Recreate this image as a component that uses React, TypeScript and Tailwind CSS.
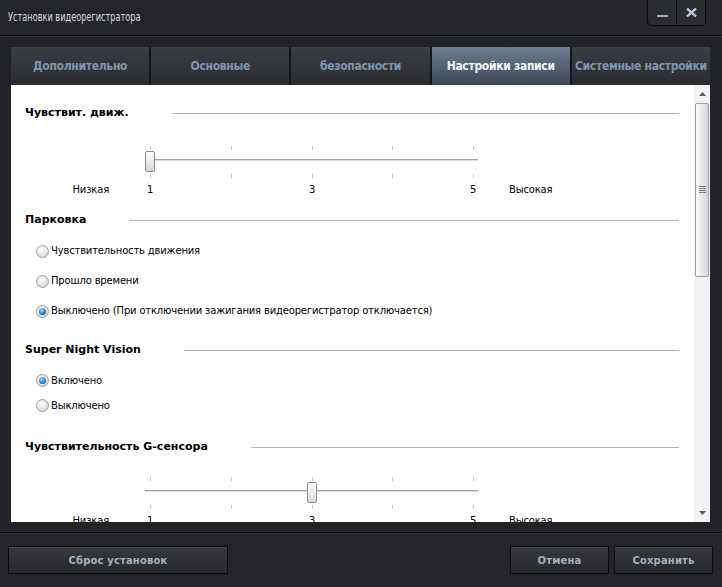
import React from "react";

const body = "font-['DejaVu_Sans',sans-serif] text-[10px] tracking-[-0.17px] text-black";
const head = "font-['DejaVu_Sans',sans-serif] font-bold text-[11px] text-black";
const narrow = "font-['DejaVu_Sans_Condensed',sans-serif]";

const TICKS = [0, 1, 2, 3, 4];

function Heading({ text }: { text: string }) {
  return (
    <div className="flex h-[16px] items-center">
      <span className={`${head} leading-[16px] whitespace-nowrap`}>{text}</span>
      <div className="ml-[43px] h-px flex-1 bg-[#a9b5c1]" />
    </div>
  );
}

function Slider({ value }: { value: number }) {
  const tx = (i: number) => 5 + i * 80.75;
  return (
    <div className="relative ml-[120px] h-[52px] w-[334px]">
      {TICKS.map((i) => (
        <div key={"t" + i} className="absolute top-0 h-[4px] w-px bg-[#c6c6c6]" style={{ left: Math.round(tx(i)) }} />
      ))}
      <div className="absolute left-0 top-[13px] w-[333px]">
        <div className="h-px bg-[#a4a4a4]" />
        <div className="h-px bg-[#dedede]" />
      </div>
      {TICKS.map((i) => (
        <div key={"b" + i} className="absolute top-[28px] h-[4px] w-px bg-[#c6c6c6]" style={{ left: Math.round(tx(i)) }} />
      ))}
      <div
        className="absolute top-[5px] h-[21px] w-[10px] rounded-[2px] border border-[#8a8a8a] bg-gradient-to-b from-[#ffffff] to-[#d6d6d6]"
        style={{ left: Math.round(tx(value)) - 5 }}
      />
      {[0, 2, 4].map((i) => (
        <div
          key={"n" + i}
          className={`${body} absolute top-[37px] w-[20px] text-center leading-[14px]`}
          style={{ left: Math.round(tx(i)) - 10 }}
        >
          {i + 1}
        </div>
      ))}
      <div className={`${body} absolute right-[calc(100%+36px)] top-[37px] leading-[14px] whitespace-nowrap`}>Низкая</div>
      <div className={`${body} absolute left-[364px] top-[37px] leading-[14px] whitespace-nowrap`}>Высокая</div>
    </div>
  );
}

function Radio({ checked, label, h }: { checked?: boolean; label: string; h: string }) {
  return (
    <div className={`flex items-center pl-[11px] ${h}`}>
      <span className="flex h-[13px] w-[13px] items-center justify-center rounded-full border border-[#a0a0a0] bg-[radial-gradient(circle_at_40%_35%,#ffffff,#e6e6e6_50%,#c4c4c4)]">
        {checked && (
          <span className="h-[7px] w-[7px] rounded-full bg-[radial-gradient(circle_at_40%_35%,#a5dafc,#2a7fc8_55%,#0c3f78)]" />
        )}
      </span>
      <span className={`${body} ml-[2px] leading-[14px] whitespace-nowrap`}>{label}</span>
    </div>
  );
}

function Tab({ label, active }: { label: string; active?: boolean }) {
  return (
    <div
      className={`flex min-w-0 flex-1 basis-0 items-center justify-center overflow-hidden ${narrow} font-bold text-[12px] tracking-[-0.3px] whitespace-nowrap ${
        active
          ? "bg-gradient-to-b from-[#6d7d91] to-[#3d4857] text-[#f4f5f6]"
          : "bg-gradient-to-b from-[#3a3d42] to-[#2a2c30] text-[#7f96b2]"
      }`}
    >
      {label}
    </div>
  );
}

function FootButton({ label, w }: { label: string; w: string }) {
  return (
    <button
      className={`${w} h-[28px] border border-[#0b0b0c] bg-gradient-to-b from-[#36383c] to-[#26282b] shadow-[inset_0_1px_0_#44474c] font-['DejaVu_Sans',sans-serif] font-bold text-[10px] tracking-[0.15px] text-[#a2afbf]`}
    >
      {label}
    </button>
  );
}

export default function App() {
  return (
    <div className="flex h-[587px] w-[722px] flex-col overflow-hidden bg-[#222326]">
      {/* title bar */}
      <div className="flex h-[36px] items-start justify-between border-b border-[#0e0f10] bg-[#242528]">
        <div className="flex h-[14px] items-center pl-[8px] pt-0 mt-[10px]">
          <span
            className={`${narrow} block origin-left scale-x-[0.7] whitespace-nowrap text-[13px] leading-[14px] text-[#d8d8d8]`}
          >
            Установки видеорегистратора
          </span>
        </div>
        <div className="mr-[16px] flex h-[26px] overflow-hidden rounded-b-[5px] border border-t-0 border-[#0b0b0c] bg-[#2a2c2f]">
          <div className="flex w-[28px] items-start justify-center pt-[15px]">
            <svg width="11" height="3" viewBox="0 0 11 3">
              <rect x="0" y="0" width="11" height="2" fill="#a9b1bd" />
            </svg>
          </div>
          <div className="w-px bg-[#111214]" />
          <div className="flex w-[28px] items-start justify-center pt-[8px]">
            <svg width="11" height="9" viewBox="0 0 11 9">
              <path d="M1 0.5 L10 8.5 M10 0.5 L1 8.5" stroke="#b9c5d6" strokeWidth="2.4" />
            </svg>
          </div>
        </div>
      </div>
      <div className="h-px bg-[#2f3135]" />

      {/* body */}
      <div className="pl-[11px] pr-[12px] pt-[10px]">
        <div className="flex h-[38px] gap-[2px] bg-[#151618]">
          <Tab label="Дополнительно" />
          <Tab label="Основные" />
          <Tab label="безопасности" />
          <Tab label="Настройки записи" active />
          <Tab label="Системные настройки" />
        </div>
        <div className="flex h-[437px] bg-white">
          <div className="flex-1 overflow-hidden pl-[14px] pr-[15px]">
            <div className="pt-[20px]">
              <Heading text="Чувствит. движ." />
              <div className="h-[25px]" />
              <Slider value={0} />
              <div className="h-[14px]" />
              <Heading text="Парковка" />
              <div className="h-[8px]" />
              <Radio h="h-[30px]" label="Чувствительность движения" />
              <Radio h="h-[30px]" label="Прошло времени" />
              <Radio h="h-[30px]" checked label="Выключено (При отключении зажигания видеорегистратор отключается)" />
              <div className="h-[16px]" />
              <Heading text="Super Night Vision" />
              <div className="h-[10px]" />
              <Radio h="h-[25px]" checked label="Включено" />
              <Radio h="h-[25px]" label="Выключено" />
              <div className="h-[21px]" />
              <Heading text="Чувствительность G-сенсора" />
              <div className="h-[22px]" />
              <Slider value={2} />
            </div>
          </div>
          {/* scrollbar */}
          <div className="flex w-[16px] flex-col items-center bg-[#f2f2f2]">
            <div className="flex h-[18px] items-center justify-center">
              <svg width="7" height="4" viewBox="0 0 7 4">
                <path d="M0 4 L3.5 0 L7 4 Z" fill="#5a5a5a" />
              </svg>
            </div>
            <div className="flex h-[174px] w-[14px] items-center justify-center rounded-[2px] border border-[#9e9e9e] bg-gradient-to-r from-[#fafafa] to-[#d6d6d6]">
              <svg width="7" height="8" viewBox="0 0 7 8">
                <rect x="0" y="0" width="7" height="1" fill="#7a7a7a" />
                <rect x="0" y="2" width="7" height="1" fill="#7a7a7a" />
                <rect x="0" y="4" width="7" height="1" fill="#7a7a7a" />
                <rect x="0" y="6" width="7" height="1" fill="#7a7a7a" />
              </svg>
            </div>
            <div className="flex-1" />
            <div className="flex h-[18px] items-center justify-center">
              <svg width="7" height="4" viewBox="0 0 7 4">
                <path d="M0 0 L7 0 L3.5 4 Z" fill="#5a5a5a" />
              </svg>
            </div>
          </div>
        </div>
      </div>

      {/* footer */}
      <div className="mt-[10px] h-px bg-[#0f1011]" />
      <div className="h-px bg-[#2c2e31]" />
      <div className="flex flex-1 items-start justify-between bg-[#232427] pl-[8px] pr-[9px] pt-[12px]">
        <FootButton label="Сброс установок" w="w-[220px]" />
        <div className="flex gap-[5px]">
          <FootButton label="Отмена" w="w-[99px]" />
          <FootButton label="Сохранить" w="w-[99px]" />
        </div>
      </div>
    </div>
  );
}
